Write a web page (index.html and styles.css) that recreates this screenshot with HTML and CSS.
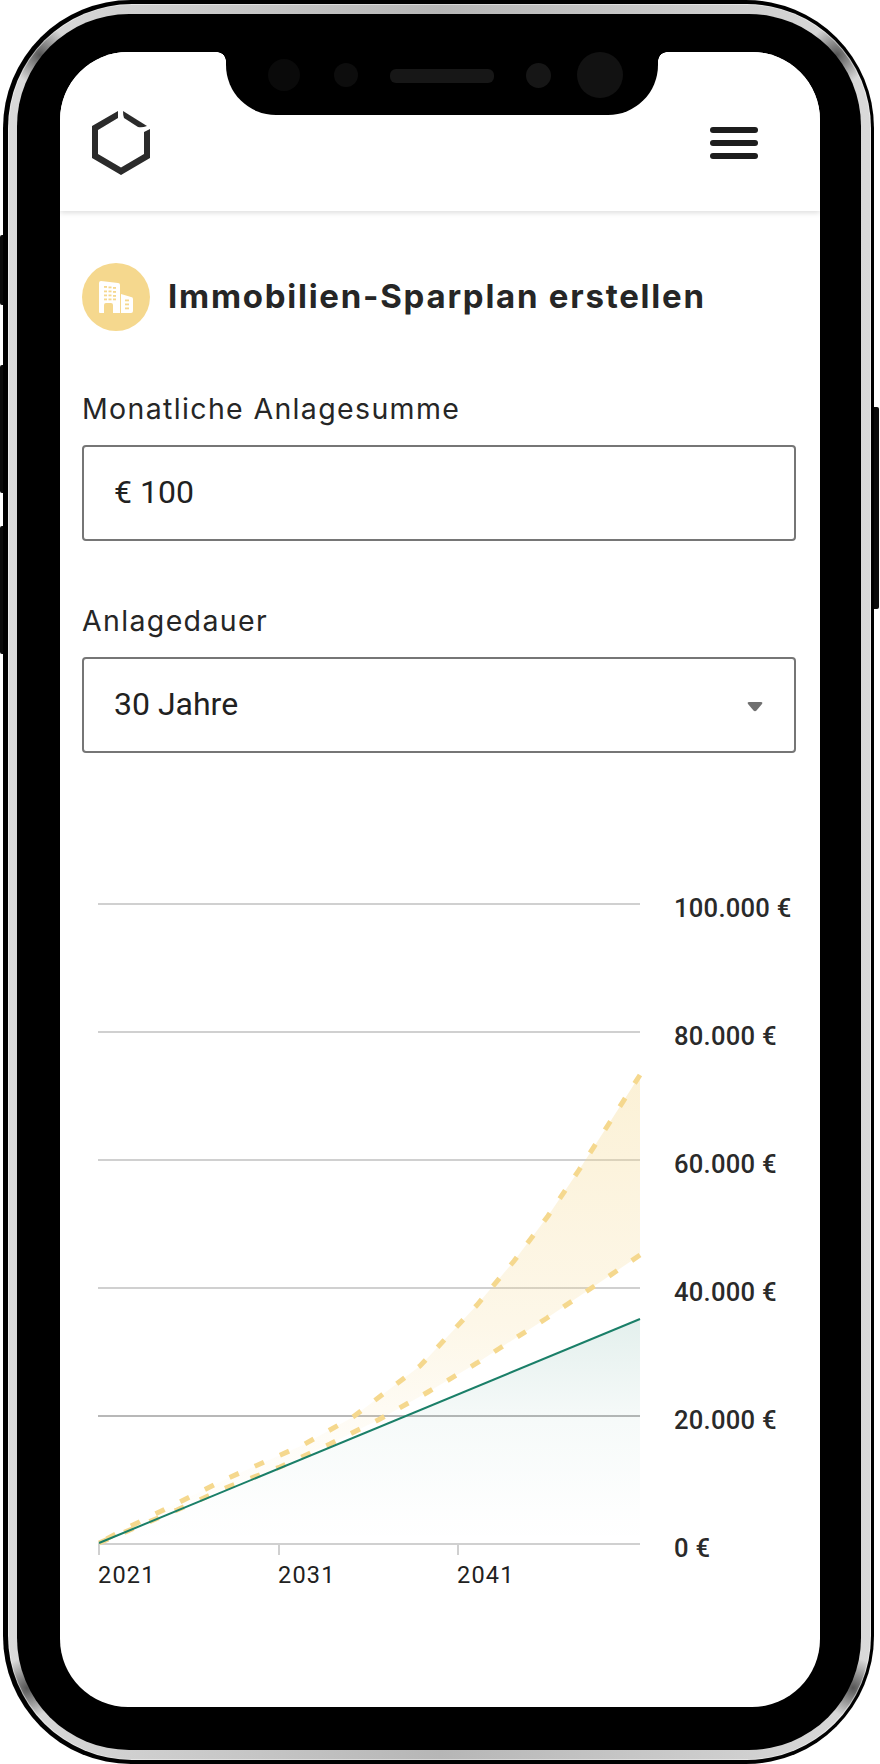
FILE: index.html
```html
<!DOCTYPE html>
<html lang="de">
<head>
<meta charset="utf-8">
<title>Immobilien-Sparplan erstellen</title>
<link rel="stylesheet" href="styles.css">
</head>
<body>
<div class="device">
  <span class="side-btn left b1"></span>
  <span class="side-btn left b2"></span>
  <span class="side-btn left b3"></span>
  <span class="side-btn right b4"></span>
  <div class="phone">
    <div class="bezel">
      <div class="well">
        <div class="screen">
          <div class="notch">
            <span class="sensor s1"></span>
            <span class="sensor s2"></span>
            <span class="speaker"></span>
            <span class="sensor s3"></span>
            <span class="sensor s4"></span>
          </div>
          <header class="topbar">
            <svg class="logo" viewBox="90 109 62 68" width="62" height="68" aria-hidden="true">
              <path fill="#2b2b2b" d="M118 111 92 126V158L121 175 150 158V129L144 132V154L121 167.500 98 154V130L118 118Z"/>
              <path fill="#2b2b2b" d="M123 111 147 126Q142 128 138 127L124 118Q123 115 123 111Z"/>
            </svg>
            <div class="burger"><span></span><span></span><span></span></div>
          </header>
          <main class="form">
            <div class="title-row">
              <span class="badge">
                <svg viewBox="82 263 68 68" width="68" height="68" aria-hidden="true">
                  <path fill="#fff" d="M101 281 118 283Q120 283 120 285V313H113V305Q113 303 111 303H106Q104 303 104 305V313H100Q99 313 99 312V283Q99 281 101 281Z"/>
                  <path fill="#fff" d="M121 294 131 297Q133 297 133 299V311Q133 313 131 313H121Z"/>
                  <g fill="#f5d88e">
                    <rect x="104" y="286" width="3" height="1.800"/><rect x="108.500" y="286.500" width="3" height="1.800"/><rect x="113" y="287" width="3" height="1.800"/>
                    <rect x="104" y="290.500" width="3" height="1.800"/><rect x="108.500" y="290.500" width="3" height="1.800"/><rect x="113" y="291" width="3" height="1.800"/>
                    <rect x="104" y="294.500" width="3" height="1.800"/><rect x="108.500" y="294.500" width="3" height="1.800"/><rect x="113" y="295" width="3" height="1.800"/>
                    <rect x="104" y="298.500" width="3" height="1.800"/><rect x="108.500" y="298.500" width="3" height="1.800"/><rect x="113" y="298.500" width="3" height="1.800"/>
                    <rect x="125" y="299.500" width="4" height="1.800"/><rect x="125" y="303.500" width="4" height="1.800"/><rect x="125" y="307.500" width="4" height="1.800"/>
                  </g>
                </svg>
              </span>
              <h1 class="title">Immobilien-Sparplan erstellen</h1>
            </div>
            <div class="field">
              <label class="label">Monatliche Anlagesumme</label>
              <div class="control">€ 100</div>
            </div>
            <div class="field second">
              <label class="label">Anlagedauer</label>
              <div class="control">30 Jahre
                <svg class="caret" viewBox="0 0 16 10" width="16" height="10" aria-hidden="true"><path fill="#707070" d="M2 0H14Q16 0 15 2L9.500 8.500Q8 10 6.500 8.500L1 2Q0 0 2 0Z"/></svg>
              </div>
            </div>
          </main>
          <svg class="chart" viewBox="60 880 760 720" width="760" height="720" role="img" aria-label="Prognose">
            <defs>
              <linearGradient id="gold" gradientUnits="userSpaceOnUse" x1="0" y1="1076" x2="0" y2="1530">
                <stop offset="0" stop-color="#f5d88e" stop-opacity=".36"/>
                <stop offset=".55" stop-color="#f5d88e" stop-opacity=".2"/>
                <stop offset=".8" stop-color="#f5d88e" stop-opacity=".07"/>
                <stop offset="1" stop-color="#f5d88e" stop-opacity=".01"/>
              </linearGradient>
              <linearGradient id="teal" gradientUnits="userSpaceOnUse" x1="0" y1="1319" x2="0" y2="1544">
                <stop offset="0" stop-color="#1a7f68" stop-opacity=".12"/>
                <stop offset=".45" stop-color="#1a7f68" stop-opacity=".04"/>
                <stop offset=".85" stop-color="#1a7f68" stop-opacity=".008"/>
                <stop offset="1" stop-color="#1a7f68" stop-opacity="0"/>
              </linearGradient>
            </defs>
            <g class="grid">
              <line x1="98" x2="640" y1="904" y2="904"/>
              <line x1="98" x2="640" y1="1032" y2="1032"/>
              <line x1="98" x2="640" y1="1160" y2="1160"/>
              <line x1="98" x2="640" y1="1288" y2="1288"/>
              <line class="dark" x1="98" x2="640" y1="1416" y2="1416"/>
              <line x1="98" x2="640" y1="1544" y2="1544"/>
              <line x1="99" x2="99" y1="1544" y2="1555"/>
              <line x1="279" x2="279" y1="1544" y2="1555"/>
              <line x1="458" x2="458" y1="1544" y2="1555"/>
            </g>
            <path fill="url(#gold)" d="M99 1543 125 1529 226 1479 303 1445 353 1417 420 1366 477 1305 514 1261 548 1216 579 1170 610 1122 640 1075V1255L593 1287 547 1318 500 1348 477 1363 428 1392 380 1419 330 1444 280 1467 228 1487 177 1510Z"/>
            <path fill="url(#teal)" d="M99 1543 640 1319V1544H99Z"/>
            <path class="dash" d="M640 1075 610 1122 579 1170 548 1216 514 1261 477 1305 420 1366 353 1417 303 1445 226 1479 125 1529 99 1543"/>
            <path class="dash" d="M640 1255 593 1287 547 1318 500 1348 477 1363 428 1392 380 1419 330 1444 280 1467 228 1487 177 1510 99 1543"/>
            <path class="trend" d="M99 1543 640 1319"/>
            <g class="yaxis">
              <text x="674" y="917">100.000 €</text>
              <text x="674" y="1045">80.000 €</text>
              <text x="674" y="1173">60.000 €</text>
              <text x="674" y="1301">40.000 €</text>
              <text x="674" y="1429">20.000 €</text>
              <text x="674" y="1557">0 €</text>
            </g>
            <g class="xaxis">
              <text x="98" y="1583">2021</text>
              <text x="278" y="1583">2031</text>
              <text x="457" y="1583">2041</text>
            </g>
          </svg>
        </div>
      </div>
    </div>
  </div>
</div>
</body>
</html>
```
FILE: styles.css
```css
* { box-sizing: border-box; }
html, body { margin: 0; padding: 0; background: #fff; }
.device { position: relative; width: 880px; height: 1764px; padding: 0 6px 0 3px; overflow: hidden; }
.side-btn { position: absolute; background: #0a0a0a; }
.side-btn.left { left: 0; width: 5px; border-radius: 2px 0 0 2px; }
.side-btn.right { right: 1px; width: 7px; border-radius: 0 2px 2px 0; }
.b1 { top: 235px; height: 70px; }
.b2 { top: 365px; height: 128px; }
.b3 { top: 526px; height: 128px; }
.b4 { top: 407px; height: 202px; }
.phone { position: relative; height: 1764px; background: #000; border-radius: 128px; padding: 4px 3px 4px 5px; }
.bezel {
  height: 100%;
  padding: 10px 10px 10px 9px;
  border-radius: 124px;
  box-shadow: inset 0 0 0 1px rgba(255,255,255,.45);
  background:
    radial-gradient(circle 30px at 32px 51px, #555, rgba(85,85,85,0)),
    radial-gradient(circle 30px at 829px 51px, #555, rgba(85,85,85,0)),
    radial-gradient(circle 30px at 19px 1684px, #555, rgba(85,85,85,0)),
    radial-gradient(circle 30px at 845px 1684px, #555, rgba(85,85,85,0)),
    linear-gradient(90deg, #dadada, #b6b6b6 50%, #dadada);
}
.well { height: 100%; background: #000; border-radius: 112px; padding: 38px 41px 43px 43px; }
.screen { position: relative; height: 100%; background: #fff; border-radius: 68px; overflow: hidden; }
.notch {
  position: absolute; top: 0; left: 166px; width: 432px; height: 63px; background: #000;
  border-radius: 0 0 50px 50px; display: flex; align-items: center; z-index: 2;
}
.notch::before, .notch::after { content: ""; position: absolute; top: 0; width: 9px; height: 9px; }
.notch::before { left: -9px; background: radial-gradient(circle at 0 100%, transparent 8.500px, #000 9px); }
.notch::after { right: -9px; background: radial-gradient(circle at 100% 100%, transparent 8.500px, #000 9px); }
.sensor { position: absolute; border-radius: 50%; }
.s1 { left: 42px; top: 7px; width: 32px; height: 32px; background: #0a0a0a; }
.s2 { left: 108px; top: 11px; width: 24px; height: 24px; background: #0d0d0d; }
.speaker { position: absolute; left: 164px; top: 17px; width: 104px; height: 14px; border-radius: 6px; background: #171717; }
.s3 { left: 300px; top: 11px; width: 25px; height: 25px; background: #161616; }
.s4 { left: 351px; top: 0; width: 46px; height: 46px; background: #121212; }
.topbar {
  height: 159px; padding: 57px 62px 0 30px; display: flex; justify-content: space-between; align-items: flex-start;
  box-shadow: 0 2px 5px rgba(0,0,0,.13); background: #fff;
}
.burger { display: flex; flex-direction: column; gap: 7px; width: 48px; margin-top: 18px; }
.burger span { height: 6px; border-radius: 3px; background: #1d1d1d; }
.form { padding: 52px 24px 0 22px; }
.title-row { display: flex; align-items: center; gap: 18px; }
.badge { width: 68px; height: 68px; border-radius: 50%; background: #f5d88e; flex: none; }
.badge svg { display: block; }
.title { margin: 0 0 2px; font: 700 33px/66px Inter, sans-serif; letter-spacing: 1.75px; color: #262626; white-space: nowrap; }
.field { margin-top: 58px; }
.field.second { margin-top: 60px; }
.label { display: block; font: 400 28.500px/40px Inter, sans-serif; letter-spacing: 1.35px; color: #262626; height: 50px; margin-bottom: 6px; }
.control {
  position: relative; height: 96px; border: 2px solid #767676; border-radius: 4px; padding-left: 30px;
  font: 400 32px/90px Roboto, sans-serif; color: #212121;
}
.caret { position: absolute; right: 31px; top: 43px; }
.chart { display: block; position: absolute; left: 0; top: 828px; }
.grid line { stroke: #d0d0d0; stroke-width: 2; }
.grid line.dark { stroke: #b8b8b8; }
.dash { fill: none; stroke: #f5d88e; stroke-width: 5; stroke-dasharray: 10 17.500; }
.trend { fill: none; stroke: #1a7f68; stroke-width: 2; }
.yaxis text { font: 500 25.600px Roboto, sans-serif; letter-spacing: .25px; fill: #2a2a2a; }
.xaxis text { font: 400 23.500px Roboto, sans-serif; letter-spacing: 1.2px; fill: #212121; }
```
